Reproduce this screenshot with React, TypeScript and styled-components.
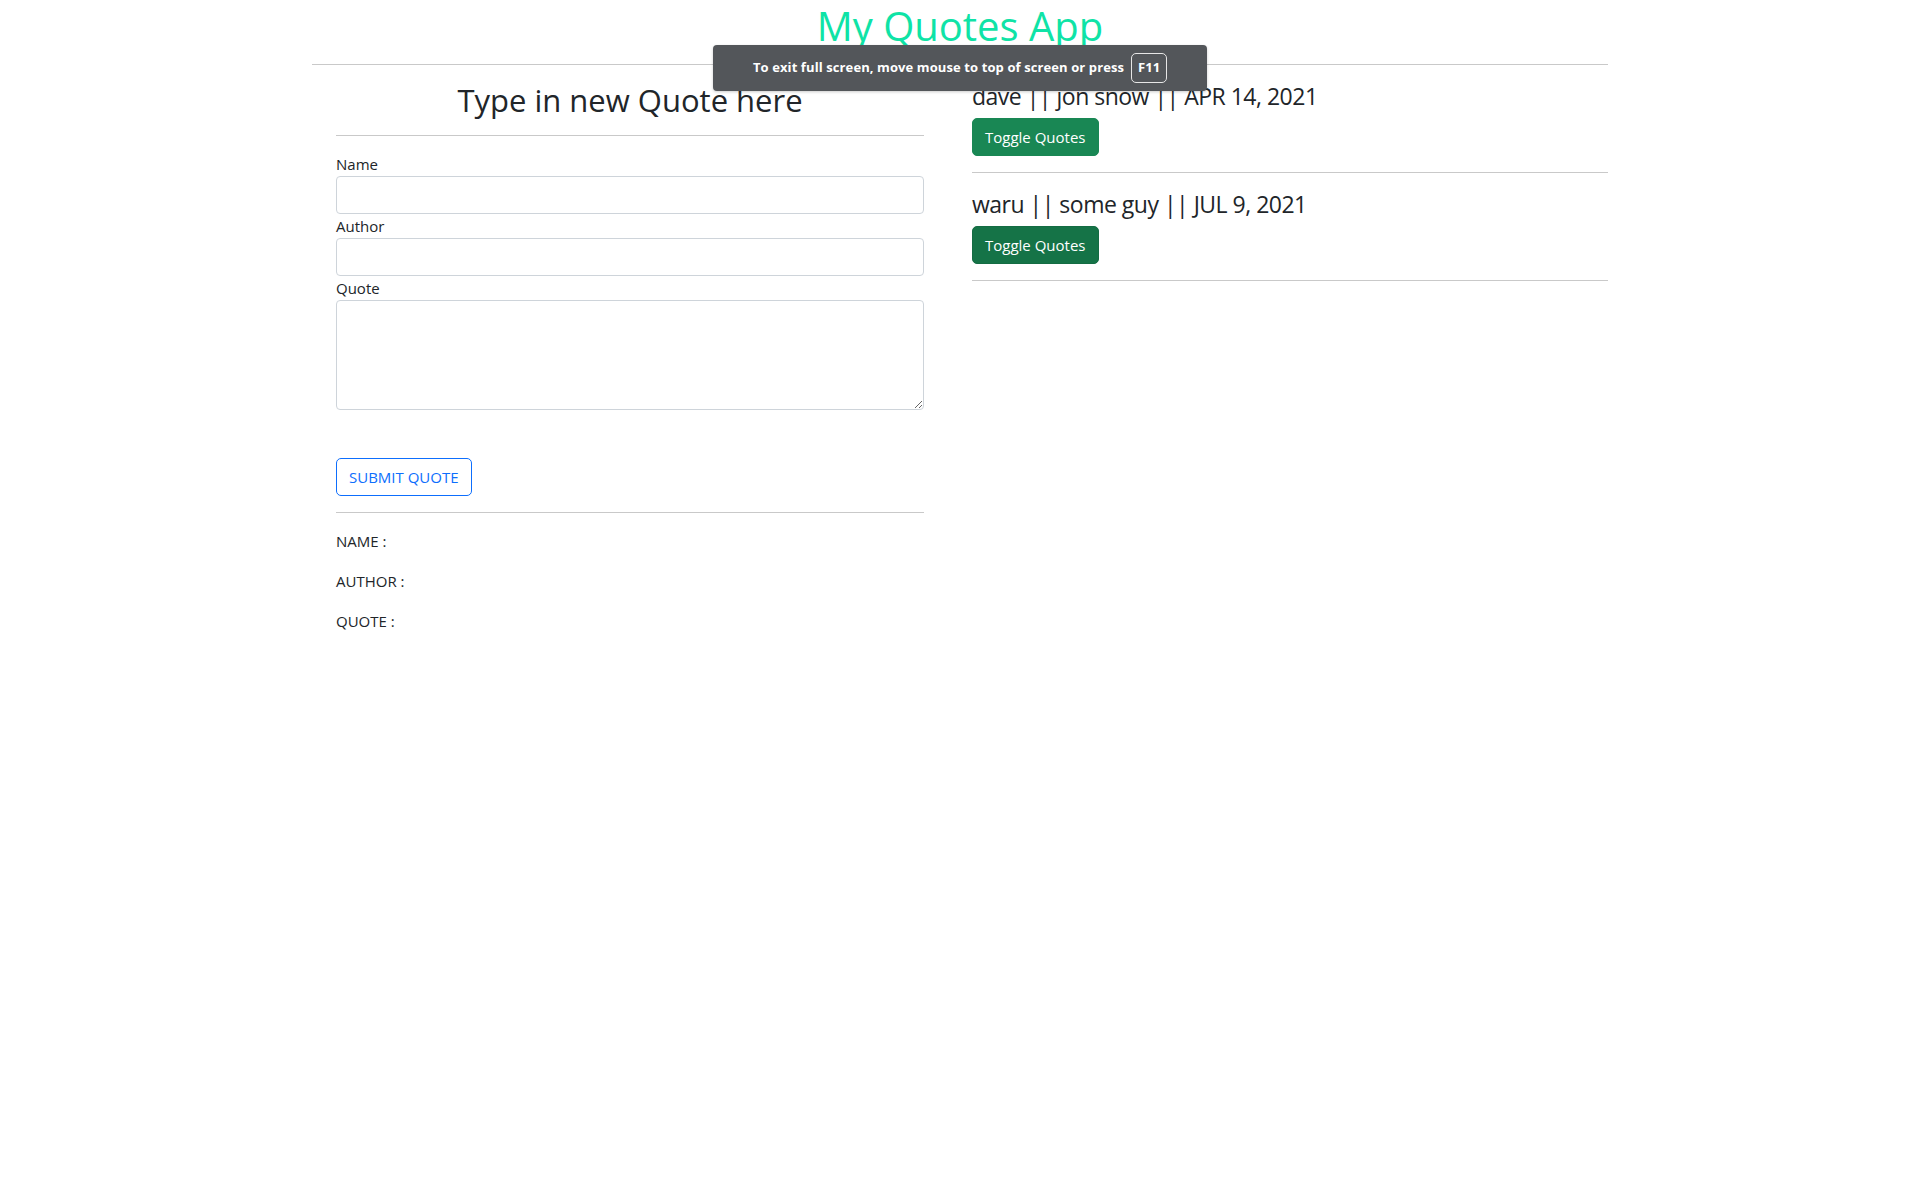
import React from "react";
import styled, { createGlobalStyle } from "styled-components";

const GlobalStyle = createGlobalStyle`
  *, *::before, *::after { box-sizing: border-box; }
  html, body { margin: 0; padding: 0; background: #ffffff; }
  body {
    font-family: "Open Sans", "Noto Sans", "Liberation Sans", sans-serif;
    font-size: 16px;
    line-height: 1.5;
    color: #212529;
  }
`;

const Page = styled.div`
  position: relative;
  min-height: 1200px;
`;

const Container = styled.div`
  width: 1320px;
  margin: 0 auto;
  padding: 0 12px;
`;

const AppTitle = styled.h1`
  margin: 0;
  padding-top: 4px;
  text-align: center;
  font-size: 40px;
  font-weight: 500;
  line-height: 44px;
  color: #0fe3a6;
`;

const Rule = styled.hr`
  margin: 16px 0;
  border: 0;
  border-top: 1px solid #c9c9c9;
  height: 0;
`;

const Row = styled.div`
  display: grid;
  grid-template-columns: 1fr 1fr;
  margin: 0 -12px;
`;

const FormColumn = styled.section`
  padding: 0 36px;
`;

const ListColumn = styled.section`
  padding: 0 12px;
`;

const FormTitle = styled.h2`
  margin: 0;
  text-align: center;
  font-size: 31px;
  font-weight: 500;
  line-height: 38px;
  color: #212529;
`;

const Form = styled.form`
  display: flex;
  flex-direction: column;
`;

const Label = styled.label`
  display: block;
  font-size: 15px;
  line-height: 24px;
`;

const Input = styled.input`
  display: block;
  width: 100%;
  height: 38px;
  padding: 6px 12px;
  font: inherit;
  border: 1px solid #ced4da;
  border-radius: 4px;
  background: #fff;
`;

const TextArea = styled.textarea`
  display: block;
  width: 100%;
  height: 110px;
  padding: 6px 12px;
  font: inherit;
  border: 1px solid #ced4da;
  border-radius: 4px;
  background: #fff;
  resize: vertical;
`;

const SubmitButton = styled.button`
  align-self: flex-start;
  margin-top: 48px;
  height: 38px;
  padding: 6px 12px;
  font: inherit;
  font-size: 15px;
  line-height: 24px;
  color: #0d6efd;
  background: transparent;
  border: 1px solid #0d6efd;
  border-radius: 5px;
  cursor: pointer;
`;

const Preview = styled.p`
  margin: 0 0 16px;
  font-size: 15px;
  line-height: 24px;
`;

const QuoteHeading = styled.h4`
  margin: 0 0 8px;
  padding-top: 1px;
  font-size: 23px;
  font-weight: 500;
  letter-spacing: -0.5px;
  line-height: 28px;
`;

const ToggleButton = styled.button<{ $hover?: boolean }>`
  display: inline-block;
  height: 38px;
  padding: 6px 12px;
  font: inherit;
  font-size: 15px;
  line-height: 24px;
  color: #fff;
  background: ${(p) => (p.$hover ? "#157347" : "#198754")};
  border: 1px solid ${(p) => (p.$hover ? "#146c43" : "#198754")};
  border-radius: 5px;
  cursor: pointer;
`;

const FullscreenToast = styled.div`
  position: absolute;
  top: 45px;
  left: 50%;
  transform: translateX(-50%);
  width: 494px;
  height: 46px;
  display: flex;
  align-items: center;
  justify-content: center;
  gap: 7px;
  background: #53565a;
  border-radius: 4px;
  color: #fff;
  font-family: "Open Sans", "Noto Sans", sans-serif;
  font-weight: 700;
  font-size: 13px;
  letter-spacing: 0.1px;
  box-shadow: 0 1px 3px rgba(0, 0, 0, 0.2);
`;

const Key = styled.span`
  display: inline-flex;
  align-items: center;
  justify-content: center;
  width: 36px;
  height: 30px;
  border: 1px solid #e6e6e6;
  border-radius: 5px;
  font-size: 13px;
`;

const quotes = [
  { name: "dave", author: "jon snow", date: "APR 14, 2021" },
  { name: "waru", author: "some guy", date: "JUL 9, 2021" },
];

export default function App() {
  return (
    <Page>
      <GlobalStyle />
      <Container>
        <AppTitle>My Quotes App</AppTitle>
        <Rule />
        <Row>
          <FormColumn>
            <FormTitle>Type in new Quote here</FormTitle>
            <Rule />
            <Form onSubmit={(e) => e.preventDefault()}>
              <Label htmlFor="name">Name</Label>
              <Input id="name" type="text" />
              <Label htmlFor="author">Author</Label>
              <Input id="author" type="text" />
              <Label htmlFor="quote">Quote</Label>
              <TextArea id="quote" />
              <SubmitButton type="submit">SUBMIT QUOTE</SubmitButton>
            </Form>
            <Rule />
            <Preview>NAME :</Preview>
            <Preview>AUTHOR :</Preview>
            <Preview>QUOTE :</Preview>
          </FormColumn>
          <ListColumn>
            {quotes.map((q, i) => (
              <div key={q.name}>
                <QuoteHeading>
                  {q.name} || {q.author} || {q.date}
                </QuoteHeading>
                <ToggleButton $hover={i === 1}>Toggle Quotes</ToggleButton>
                <Rule />
              </div>
            ))}
          </ListColumn>
        </Row>
      </Container>
      <FullscreenToast>
        <span>To exit full screen, move mouse to top of screen or press</span>
        <Key>F11</Key>
      </FullscreenToast>
    </Page>
  );
}
